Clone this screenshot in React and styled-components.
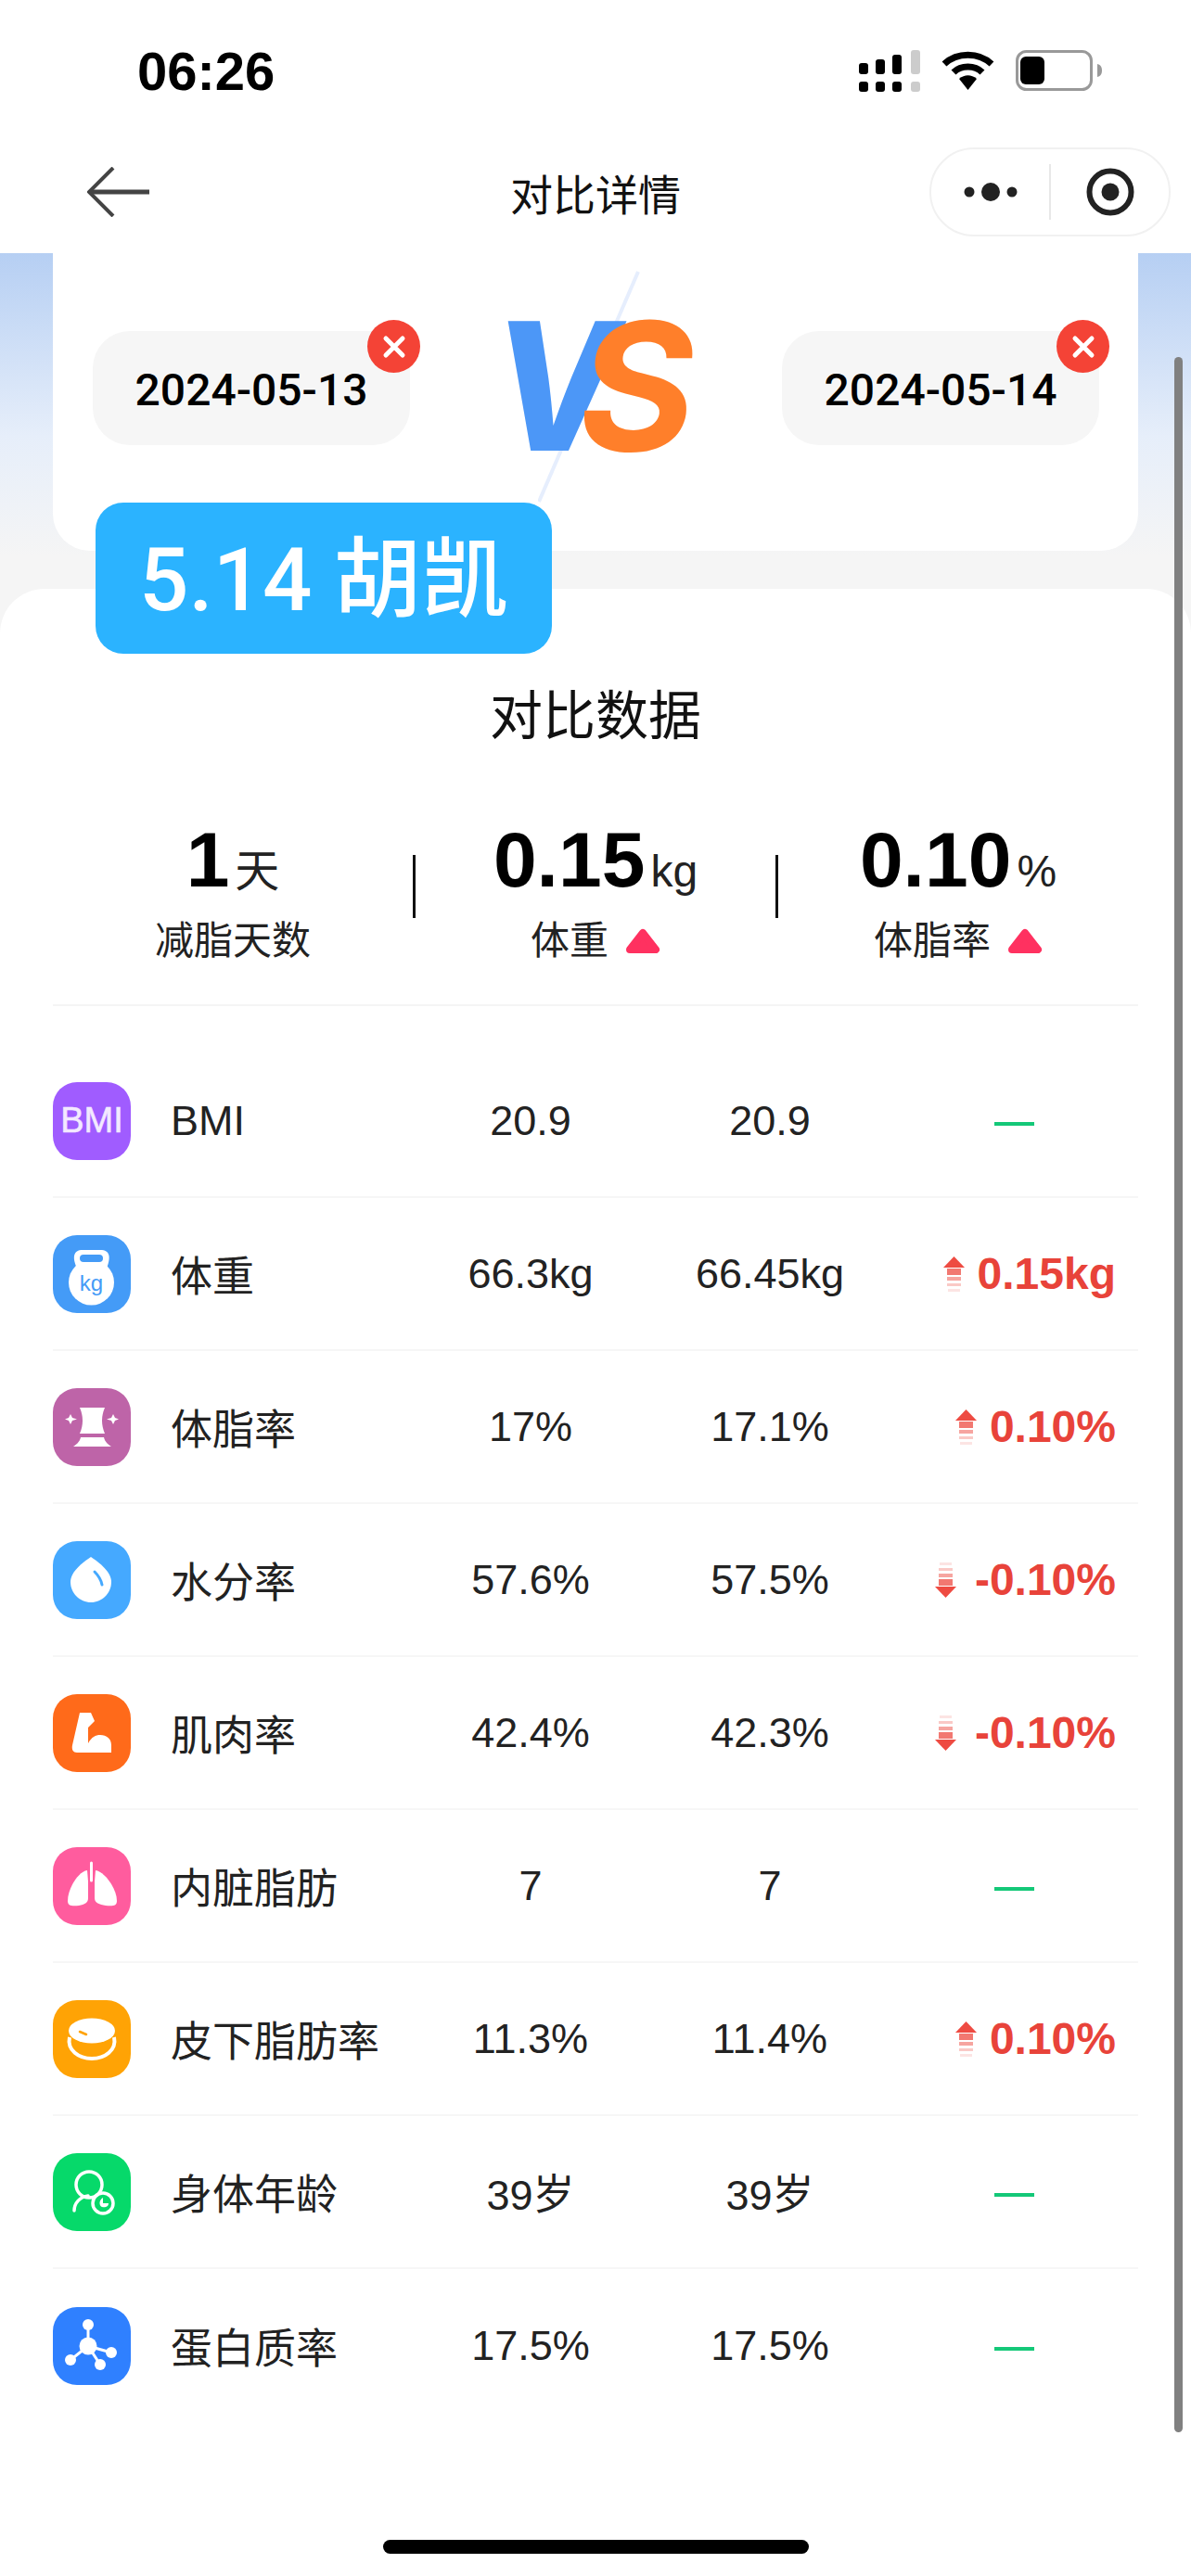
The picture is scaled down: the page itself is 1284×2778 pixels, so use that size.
import React from "react";
import styled, { createGlobalStyle } from "styled-components";

const SANS = `"Liberation Sans", "Noto Sans CJK SC", sans-serif`;
const MEDIUM = `Roboto, "Noto Sans CJK SC", sans-serif`;

const GlobalStyle = createGlobalStyle`
  html, body {
    margin: 0;
    padding: 0;
    background: #fff;
  }
  * {
    box-sizing: border-box;
  }
`;

const Screen = styled.div`
  position: relative;
  width: 1284px;
  height: 2778px;
  overflow: hidden;
  font-family: ${SANS};
  color: #111;
  background: linear-gradient(#b6cff3 273px, #e6eefa 470px, #f5f5f5 600px);
`;

const Header = styled.header`
  background: #fff;
`;

const StatusBar = styled.div`
  height: 140px;
  padding: 12px 96px 0 148px;
  display: flex;
  align-items: center;
  justify-content: space-between;
`;

const Time = styled.span`
  font-size: 58px;
  font-weight: 700;
  color: #000;
`;

const StatusIcons = styled.div`
  display: flex;
  align-items: center;
  gap: 23px;
`;

const Nav = styled.div`
  height: 133px;
  padding: 0 22px 0 94px;
  display: flex;
  align-items: center;
  justify-content: space-between;
  position: relative;
`;

const NavTitle = styled.h1`
  position: absolute;
  left: 0;
  right: 0;
  margin: 0;
  text-align: center;
  font-size: 46px;
  font-weight: 400;
  color: #111;
  pointer-events: none;
`;

const Capsule = styled.div`
  width: 260px;
  height: 96px;
  border: 2px solid #f1f1f1;
  border-radius: 48px;
  display: flex;
  align-items: center;
  background: #fff;
`;

const CapsulePart = styled.div`
  flex: 1;
  display: flex;
  align-items: center;
  justify-content: center;
`;

const CapsuleLine = styled.div`
  width: 2px;
  height: 60px;
  background: #e8e8e8;
`;

const Card = styled.section`
  position: relative;
  z-index: 2;
  height: 321px;
  margin: 0 57px;
  padding: 84px 42px 0 43px;
  background: #fff;
  border-radius: 0 0 40px 40px;
  display: flex;
  align-items: flex-start;
  justify-content: space-between;
`;

const DateChip = styled.div`
  position: relative;
  width: 342px;
  height: 123px;
  border-radius: 40px;
  background: #f6f6f6;
  display: flex;
  align-items: center;
  justify-content: center;
  font-family: ${MEDIUM};
  font-size: 48px;
  font-weight: 500;
  color: #000;
  padding-top: 4px;
`;

const CloseBadge = styled.span`
  position: absolute;
  top: -12px;
  right: -11px;
  width: 57px;
  height: 57px;
  border-radius: 50%;
  background: #f44336;
  display: flex;
  align-items: center;
  justify-content: center;
`;

const VsMark = styled.div`
  position: relative;
  width: 200px;
  height: 148px;
  margin: -15px 0 0 -6px;
  display: flex;
  justify-content: center;
  font-family: Inter, "Open Sans", sans-serif;
  font-size: 192px;
  line-height: 148px;
`;

const VsLetter = styled.span`
  position: relative;
  display: inline-block;
  color: ${(p) => p.$color};
  font-weight: ${(p) => p.$weight};
  transform: skewX(-8deg) scaleX(${(p) => p.$scale});
  margin-left: ${(p) => p.$overlap || 0}px;
`;

const VsSlash = styled.svg`
  position: absolute;
  left: 523px;
  top: 0;
  pointer-events: none;
`;

const Sticker = styled.div`
  position: absolute;
  z-index: 3;
  left: 46px;
  top: 269px;
  width: 492px;
  height: 163px;
  padding-bottom: 14px;
  border-radius: 30px;
  background: #2bb3ff;
  color: #fff;
  font-family: ${MEDIUM};
  font-size: 94px;
  font-weight: 500;
  display: flex;
  align-items: center;
  justify-content: center;
  white-space: pre;
`;

const Sheet = styled.main`
  margin-top: 41px;
  height: 2143px;
  padding: 97px 57px 0;
  background: #fff;
  border-radius: 48px 48px 0 0;
`;

const SheetTitle = styled.h2`
  margin: 0;
  text-align: center;
  font-size: 57px;
  line-height: 80px;
  font-weight: 400;
  color: #111;
`;

const Stats = styled.div`
  height: 273px;
  padding-top: 69px;
  display: grid;
  grid-template-columns: 1fr auto 1fr auto 1fr;
  align-items: start;
  border-bottom: 2px solid #f5f5f5;
`;

const Stat = styled.div`
  display: flex;
  flex-direction: column;
  align-items: center;
`;

const StatValue = styled.div`
  display: flex;
  align-items: baseline;
  gap: 6px;
  height: 92px;
  line-height: 92px;
  font-size: 84px;
  font-weight: 700;
  color: #000;
`;

const StatUnit = styled.span`
  font-size: 48px;
  font-weight: 400;
  color: #222;
`;

const StatLabel = styled.div`
  margin-top: 12px;
  display: flex;
  align-items: center;
  gap: 18px;
  font-size: 42px;
  line-height: 60px;
  color: #222;
`;

const StatDivider = styled.div`
  width: 3px;
  height: 68px;
  margin-top: 41px;
  background: #111;
`;

const List = styled.div`
  padding-top: 42px;
`;

const Row = styled.div`
  height: 165px;
  display: grid;
  grid-template-columns: 127px 259px 258px 258px 268px;
  align-items: center;
  font-size: 45px;
  color: #222;
  border-bottom: ${(p) => (p.$last ? "none" : "2px solid #f6f6f6")};
`;

const IconTile = styled.div`
  width: 84px;
  height: 84px;
  border-radius: 26px;
  background: ${(p) => p.$bg};
  display: flex;
  align-items: center;
  justify-content: center;
  color: #f3e9ff;
  font-size: 38px;
  -webkit-text-stroke: 0.6px #f3e9ff;
  overflow: hidden;
`;

const Name = styled.span`
  white-space: nowrap;
`;

const Cell = styled.span`
  text-align: center;
`;

const Diff = styled.div`
  padding-right: 24px;
  display: flex;
  align-items: center;
  justify-content: flex-end;
  gap: ${(p) => (p.$down ? 20 : 14)}px;
  color: #e8433a;
  font-size: 48px;
  font-weight: 700;
`;

const Dash = styled.span`
  width: 43px;
  height: 4px;
  margin: 6px 88px 0 0;
  background: #14c878;
`;

const ScrollThumb = styled.div`
  position: absolute;
  z-index: 4;
  left: 1266px;
  top: 385px;
  width: 9px;
  height: 2238px;
  border-radius: 5px;
  background: #808080;
`;

const HomeBar = styled.div`
  position: absolute;
  z-index: 4;
  left: 413px;
  top: 2739px;
  width: 459px;
  height: 15px;
  border-radius: 8px;
  background: #000;
`;

const SignalIcon = () => (
  <svg width="66" height="45" viewBox="0 0 66 45">
    <rect x="0" y="14" width="10" height="12" rx="3" />
    <rect x="18" y="10" width="10" height="16" rx="3" />
    <rect x="36" y="5" width="10" height="21" rx="3" />
    <rect x="56" y="0" width="10" height="26" rx="3" fill="#ccc" />
    <rect x="0" y="34" width="10" height="11" rx="3" />
    <rect x="18" y="34" width="10" height="11" rx="3" />
    <rect x="36" y="34" width="10" height="11" rx="3" />
    <rect x="56" y="34" width="10" height="11" rx="3" fill="#ccc" />
  </svg>
);

const WifiIcon = () => (
  <svg width="57" height="42" viewBox="0 0 57 42" fill="none" stroke="#000" strokeWidth="7">
    <path d="M3 14 C17 1 40 1 54 14" />
    <path d="M13 23 C21 15 36 15 44 23" />
    <path d="M19 30 L28.5 42 L38 30 C32 25 25 25 19 30Z" fill="#000" stroke="none" />
  </svg>
);

const BatteryIcon = () => (
  <svg width="93" height="44" viewBox="0 0 93 44">
    <rect x="1.5" y="1.5" width="80" height="41" rx="10" fill="none" stroke="#999" strokeWidth="3" />
    <rect x="5" y="7" width="26" height="30" rx="6" fill="#000" />
    <path d="M88 15 C92 16 93 19 93 22 C93 25 92 28 88 29Z" fill="#999" />
  </svg>
);

const BackArrow = () => (
  <svg width="68" height="54" viewBox="0 0 68 54" fill="none" stroke="#444" strokeWidth="4">
    <path d="M28 1 L2 27 L28 53" />
    <path d="M2 27 H67" strokeWidth="5" />
  </svg>
);

const MoreDots = () => (
  <svg width="60" height="22" viewBox="0 0 60 22" fill="#222">
    <circle cx="7" cy="11" r="5.5" />
    <circle cx="30" cy="11" r="10" />
    <circle cx="53" cy="11" r="5.5" />
  </svg>
);

const TargetIcon = () => (
  <svg width="52" height="52" viewBox="0 0 52 52">
    <circle cx="26" cy="26" r="22.5" fill="none" stroke="#222" strokeWidth="6" />
    <circle cx="26" cy="26" r="9.5" fill="#222" />
  </svg>
);

const CloseIcon = () => (
  <svg width="30" height="30" viewBox="0 0 30 30" stroke="#fff" strokeWidth="5" strokeLinecap="round">
    <path d="M6 6 L24 24 M24 6 L6 24" />
  </svg>
);

const RedTriangle = () => (
  <svg width="38" height="30" viewBox="0 0 38 30">
    <path d="M19 6 L33 24 H5Z" fill="#ff3160" stroke="#ff3160" strokeWidth="8" strokeLinejoin="round" />
  </svg>
);

const TrendArrow = ({ down }) => (
  <svg width="23" height="38" viewBox="0 0 23 38" fill="#ee4b42">
    <g transform={down ? "rotate(180 11.5 19)" : undefined}>
      <path d="M11.5 0 L23 12 H0Z" />
      <rect x="4" y="13" width="15" height="7" opacity="0.75" />
      <rect x="4" y="22" width="15" height="4" opacity="0.5" />
      <rect x="4" y="29" width="15" height="3" opacity="0.3" />
      <rect x="5" y="35" width="13" height="3" opacity="0.15" />
    </g>
  </svg>
);

const Glyph = ({ children }) => (
  <svg width="84" height="84" viewBox="0 0 84 84">
    {children}
  </svg>
);

const KettleIcon = () => (
  <Glyph>
    <path d="M27 38 C20 24 22 16 32 16 H51 C62 16 63 24 57 38Z" fill="#fff" />
    <circle cx="41.5" cy="51" r="24.5" fill="#fff" />
    <rect x="29" y="21" width="25" height="8" rx="4" fill="#449bf7" />
    <text x="41.5" y="60" textAnchor="middle" fontSize="24" fontFamily="Liberation Sans" fill="#449bf7" stroke="none">
      kg
    </text>
  </Glyph>
);

const WaistIcon = () => (
  <Glyph>
    <path d="M29 21 H56 C52 30 52 40 56 49 H29 C33 40 33 30 29 21Z" fill="#fff" />
    <path d="M30 53 H55 C56 58 60 61 63 63 H22 C25 61 29 58 30 53Z" fill="#fff" />
    <path d="M19 28 L21 32 L26 33.500 L21 35 L19 39 L17 35 L13 33.500 L17 32Z" fill="#fff" />
    <path d="M65 28 L67 32 L71 33.500 L67 35 L65 39 L63 35 L58 33.500 L63 32Z" fill="#fff" />
  </Glyph>
);

const DropIcon = () => (
  <Glyph>
    <path d="M41 17 C50 23 63 33 63 44 C63 56 53 66 41 66 C29 66 19 56 19 44 C19 33 32 23 41 17Z" fill="#fff" />
    <path d="M45 33 C49 37 52 42 53 47" fill="none" stroke="#45a9ff" strokeWidth="3" strokeLinecap="round" />
  </Glyph>
);

const MuscleIcon = () => (
  <Glyph>
    <path
      d="M29 20 H41 L45 29 L38 36 V53 C42 46 46 44 51 44 C58 44 63 48 63 55 V63 H26 C22 63 20 60 21 55 Z"
      fill="#fff"
    />
  </Glyph>
);

const LungsIcon = () => (
  <Glyph>
    <path d="M41.500 17 V36" stroke="#fff" strokeWidth="3" strokeLinecap="round" />
    <path d="M37 25 C28 26 16 44 16 58 C16 63 20 64 28 63 C34 62 38 60 38 55 V37 Z" fill="#fff" />
    <path d="M46 25 C55 26 69 44 69 58 C69 63 65 64 57 63 C50 62 45 60 45 55 V37 Z" fill="#fff" />
  </Glyph>
);

const CoinsIcon = () => (
  <Glyph>
    <ellipse cx="42" cy="33" rx="25" ry="13.500" fill="#fff" />
    <path d="M18 40 C15 54 28 63 42 63 C56 63 69 54 66 40" fill="none" stroke="#fff" strokeWidth="4" />
    <path d="M29 34 L36 37" stroke="#ffa305" strokeWidth="2.500" strokeLinecap="round" />
  </Glyph>
);

const AgeIcon = () => (
  <Glyph>
    <g fill="none" stroke="#fff" strokeWidth="3.500" strokeLinecap="round">
      <circle cx="39" cy="34" r="14" />
      <path d="M23 62 C23 54 29 47 38 46" />
      <circle cx="54" cy="54" r="11" />
    </g>
    <path d="M54 48 V54 H60 C60 58 56 59 53 58 C50 57 49 51 54 48Z" fill="#fff" />
  </Glyph>
);

const MoleculeIcon = () => (
  <Glyph>
    <path d="M38 19 V42 L63 49 M38 42 L51 62 M38 42 L19 57" fill="none" stroke="#fff" strokeWidth="3" />
    <circle cx="38" cy="42" r="9.500" fill="#fff" />
    <circle cx="38" cy="19" r="6" fill="#fff" />
    <circle cx="63" cy="49" r="6" fill="#fff" />
    <circle cx="51" cy="62" r="6" fill="#fff" />
    <circle cx="19" cy="57" r="6" fill="#fff" />
  </Glyph>
);

const rows = [
  { name: "BMI", bg: "#a05cff", icon: "BMI", a: "20.9", b: "20.9" },
  { name: "体重", bg: "#449bf7", icon: <KettleIcon />, a: "66.3kg", b: "66.45kg", diff: "0.15kg" },
  { name: "体脂率", bg: "#be64a8", icon: <WaistIcon />, a: "17%", b: "17.1%", diff: "0.10%" },
  { name: "水分率", bg: "#45a9ff", icon: <DropIcon />, a: "57.6%", b: "57.5%", diff: "-0.10%", down: true },
  { name: "肌肉率", bg: "#ff6a1a", icon: <MuscleIcon />, a: "42.4%", b: "42.3%", diff: "-0.10%", down: true },
  { name: "内脏脂肪", bg: "#ff5c9e", icon: <LungsIcon />, a: "7", b: "7" },
  { name: "皮下脂肪率", bg: "#ffa305", icon: <CoinsIcon />, a: "11.3%", b: "11.4%", diff: "0.10%" },
  { name: "身体年龄", bg: "#06d96a", icon: <AgeIcon />, a: "39岁", b: "39岁" },
  { name: "蛋白质率", bg: "#2f80ff", icon: <MoleculeIcon />, a: "17.5%", b: "17.5%" },
];

export default function App() {
  return (
    <Screen>
      <GlobalStyle />
      <Header>
        <StatusBar>
          <Time>06:26</Time>
          <StatusIcons>
            <SignalIcon />
            <WifiIcon />
            <BatteryIcon />
          </StatusIcons>
        </StatusBar>
        <Nav>
          <BackArrow />
          <NavTitle>对比详情</NavTitle>
          <Capsule>
            <CapsulePart>
              <MoreDots />
            </CapsulePart>
            <CapsuleLine />
            <CapsulePart>
              <TargetIcon />
            </CapsulePart>
          </Capsule>
        </Nav>
      </Header>

      <Card>
        <VsSlash width="120" height="270" viewBox="0 0 120 270">
          <path d="M108 20 L1 268" stroke="#e6eefd" strokeWidth="4" />
        </VsSlash>
        <DateChip>
          2024-05-13
          <CloseBadge>
            <CloseIcon />
          </CloseBadge>
        </DateChip>
        <VsMark>
          <VsLetter $color="#4c97f7" $weight={800} $scale={0.92}>
            V
          </VsLetter>
          <VsLetter $color="#ff7f2a" $weight={700} $scale={1} $overlap={-50}>
            S
          </VsLetter>
        </VsMark>
        <DateChip>
          2024-05-14
          <CloseBadge>
            <CloseIcon />
          </CloseBadge>
        </DateChip>
        <Sticker>5.14 胡凯</Sticker>
      </Card>

      <Sheet>
        <SheetTitle>对比数据</SheetTitle>
        <Stats>
          <Stat>
            <StatValue>
              1<StatUnit>天</StatUnit>
            </StatValue>
            <StatLabel>减脂天数</StatLabel>
          </Stat>
          <StatDivider />
          <Stat>
            <StatValue>
              0.15<StatUnit>kg</StatUnit>
            </StatValue>
            <StatLabel>
              体重
              <RedTriangle />
            </StatLabel>
          </Stat>
          <StatDivider />
          <Stat>
            <StatValue>
              0.10<StatUnit>%</StatUnit>
            </StatValue>
            <StatLabel>
              体脂率
              <RedTriangle />
            </StatLabel>
          </Stat>
        </Stats>

        <List>
          {rows.map((r, i) => (
            <Row key={r.name} $last={i === rows.length - 1}>
              <IconTile $bg={r.bg}>{r.icon}</IconTile>
              <Name>{r.name}</Name>
              <Cell>{r.a}</Cell>
              <Cell>{r.b}</Cell>
              <Diff $down={r.down}>
                {r.diff ? (
                  <>
                    <TrendArrow down={r.down} />
                    {r.diff}
                  </>
                ) : (
                  <Dash />
                )}
              </Diff>
            </Row>
          ))}
        </List>
      </Sheet>

      <ScrollThumb />
      <HomeBar />
    </Screen>
  );
}
